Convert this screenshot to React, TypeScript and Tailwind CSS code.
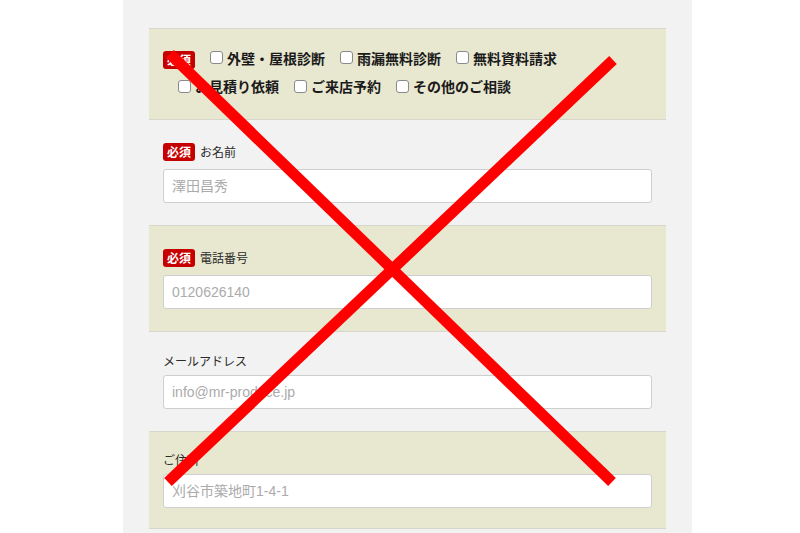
import React from "react";

const jp = { fontFamily: '"Noto Sans CJK JP", "Noto Sans", sans-serif' };
const ph = { fontFamily: '"Liberation Sans", Arial, "Noto Sans CJK JP", sans-serif' };

function Badge() {
  return (
    <span className="inline-flex h-[18px] items-center rounded-[3px] bg-[#c60000] px-[4px] text-[12px] font-bold leading-[18px] text-white">
      必須
    </span>
  );
}

function Check({ label }: { label: string }) {
  return (
    <span className="ml-[15px] inline-flex items-center whitespace-nowrap align-middle">
      <span className="mr-[4px] inline-block h-[13px] w-[13px] rounded-[3px] border border-[#8a8a8a] bg-white" />
      <span className="text-[14px] font-bold text-[#1a1a1a]">{label}</span>
    </span>
  );
}

function Field({
  label,
  placeholder,
  required,
  beige,
  pt = "pt-[23px]",
  pb = "pb-[22px]",
}: {
  label: string;
  placeholder: string;
  required?: boolean;
  beige?: boolean;
  pt?: string;
  pb?: string;
}) {
  return (
    <div className={`${beige ? "bg-[#e8e7d0]" : ""} border-b border-[#d6d6cc] px-[14px] ${pt} ${pb}`}>
      <div className={`flex items-center gap-[5px] ${required ? "mb-[8px] h-[18px]" : "mb-[7px] h-[14px]"}`}>
        {required && <Badge />}
        <span className="text-[12px] leading-[14px] text-[#2a2a2a]">{label}</span>
      </div>
      <div
        className="flex h-[34px] items-center rounded-[3px] border border-[#cfcfcf] bg-white pl-[8px] text-[14px] text-[#ababab]"
        style={ph}
      >
        {placeholder}
      </div>
    </div>
  );
}

export default function App() {
  return (
    <div className="relative flex h-[533px] w-[800px] overflow-hidden bg-white" style={jp}>
      <div className="ml-[123px] h-full w-[569px] bg-[#f2f2f2] px-[26px] pt-[28px]">
        <div className="border-y border-[#d6d6cc] bg-[#e8e7d0] px-[14px] pb-[20px] pt-[13px] leading-[26px]">
          <span className="align-middle">
            <Badge />
          </span>
          <Check label="外壁・屋根診断" />
          <Check label="雨漏無料診断" />
          <Check label="無料資料請求" />
          <Check label="お見積り依頼" />
          <Check label="ご来店予約" />
          <Check label="その他のご相談" />
        </div>
        <Field label="お名前" placeholder="澤田昌秀" required />
        <Field label="電話番号" placeholder="0120626140" required beige />
        <Field label="メールアドレス" placeholder="info@mr-produce.jp" pt="pt-[22px]" />
        <Field label="ご住所" placeholder="刈谷市築地町1-4-1" beige pt="pt-[21px]" pb="pb-[20px]" />
      </div>
      <svg className="pointer-events-none absolute left-0 top-0" width="800" height="533">
        <line x1="170" y1="54" x2="612" y2="482" stroke="#ff0000" strokeWidth="11" />
        <line x1="613" y1="60" x2="168" y2="482" stroke="#ff0000" strokeWidth="11" />
      </svg>
    </div>
  );
}
